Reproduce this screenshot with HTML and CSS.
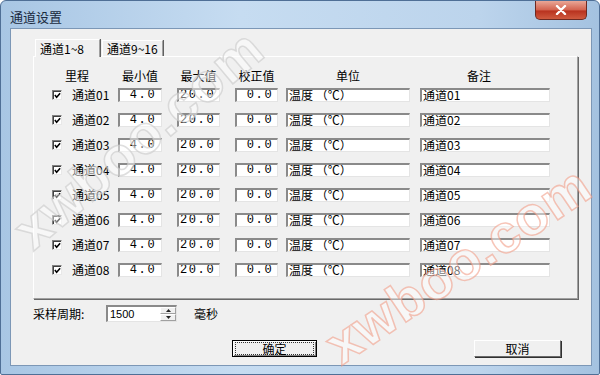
FILE: index.html
```html
<!DOCTYPE html>
<html>
<head>
    <meta charset="UTF-8">
    <title>通道设置</title>
    <link rel="stylesheet" href="styles.css">
</head>
<body>
    <div class="window">
        <div class="titlebar">
            <span class="title">通道设置</span>
            <button class="close-btn">
                <svg width="14" height="10" viewBox="0 0 14 10"><path d="M3 1 L11 9 M11 1 L3 9" stroke="#fff" stroke-width="2.4" stroke-linecap="round"/></svg>
            </button>
        </div>
        <div class="client">
            <div class="tabs">
                <div class="tab active">通道1~8</div>
                <div class="tab">通道9~16</div>
            </div>
            <div class="panel">
                <div class="grid">
                    <div class="head head-first">里程</div>
                    <div class="head w-min">最小值</div>
                    <div class="head w-max">最大值</div>
                    <div class="head w-cor">校正值</div>
                    <div class="head w-unit">单位</div>
                    <div class="head w-note head-note">备注</div>
                </div>
                <div id="rows"></div>
            </div>
            <div class="period">
                <span class="period-label">采样周期:</span>
                <div class="spin">
                    <span class="spin-value">1500</span>
                    <span class="spin-btns">
                        <span class="spin-btn"><svg width="5" height="3" viewBox="0 0 5 3"><path d="M0 3 L2.5 0 L5 3Z" fill="#222"/></svg></span>
                        <span class="spin-btn"><svg width="5" height="3" viewBox="0 0 5 3"><path d="M0 0 L2.5 3 L5 0Z" fill="#222"/></svg></span>
                    </span>
                </div>
                <span class="unit-label">毫秒</span>
            </div>
            <div class="actions">
                <button class="btn btn-default"><span class="focus">确定</span></button>
                <button class="btn btn-cancel">取消</button>
            </div>
        </div>
        <div class="watermark wm-1">xwboo.com</div>
        <div class="watermark wm-2">xwboo.com</div>
    </div>

    <script>
        const rows = document.getElementById('rows');
        for (let i = 1; i <= 8; i++) {
            const n = '0' + i;
            const row = document.createElement('div');
            row.className = 'grid row';
            row.innerHTML =
                '<div class="chan"><span class="check"><svg width="8" height="7" viewBox="0 0 8 7"><path d="M1 3 L3 5.5 L7 1" fill="none" stroke="#000" stroke-width="1.8"/></svg></span><span class="chan-name">通道' + n + '</span></div>' +
                '<div class="box w-min num">&nbsp;4.0</div>' +
                '<div class="box w-max num">20.0</div>' +
                '<div class="box w-cor num">&nbsp;0.0</div>' +
                '<div class="box w-unit">温度 （℃）</div>' +
                '<div class="box w-note">通道' + n + '</div>';
            rows.appendChild(row);
        }
    </script>
</body>
</html>
```

FILE: styles.css
```css
body {
    margin: 0;
    padding: 0;
    font-family: "Noto Sans CJK SC", "Liberation Sans", sans-serif;
    font-size: 12px;
    color: #000;
    background: #fff;
}
.window {
    position: relative;
    width: 600px;
    height: 375px;
    box-sizing: border-box;
    display: flex;
    flex-direction: column;
    background: linear-gradient(to right, #a8c6e4, #c6dcf1 40%, #bcd4ec 80%, #a4c2e0);
    border: 1px solid #4f6f96;
    border-radius: 6px 6px 2px 2px;
    overflow: hidden;
}
.titlebar {
    height: 27px;
    display: flex;
    justify-content: space-between;
    align-items: flex-start;
    flex-shrink: 0;
}
.title {
    margin: 6px 0 0 9px;
    font-size: 13px;
    color: #1a2a40;
}
.close-btn {
    width: 52px;
    height: 19px;
    margin-right: 12px;
    padding: 0;
    border: 1px solid #6d2a22;
    border-top: none;
    border-radius: 0 0 5px 5px;
    background: linear-gradient(to bottom, #e9a797, #d3624e 50%, #b8321f 55%, #cf5a3f);
    display: flex;
    align-items: center;
    justify-content: center;
}
.client {
    flex: 1;
    margin: 0 7px 8px 9px;
    border: 1px solid #7c97b6;
    background: #f0f0f0;
    padding: 0 0 0 22px;
}
.tabs {
    display: flex;
    align-items: flex-end;
    height: 27px;
    margin-left: 2px;
}
.tab {
    height: 15px;
    line-height: 15px;
    padding: 0 4px 0 4px;
    border: 1px solid #a0a0a0;
    border-bottom: none;
    border-left-color: #fff;
    border-top-color: #fff;
    box-shadow: 1px 0 0 #606060;
    margin-right: 2px;
    background: #f0f0f0;
}
.tab.active {
    height: 17px;
    line-height: 17px;
    width: 55px;
    position: relative;
    z-index: 1;
    margin-bottom: -1px;
}
.panel {
    width: 543px;
    height: 228px;
    border: 1px solid #a0a0a0;
    border-left-color: #fff;
    border-top-color: #fff;
    box-shadow: 1px 1px 0 #696969;
    padding-top: 13px;
}
.grid {
    display: flex;
    align-items: center;
    padding-left: 18px;
}
.head {
    height: 12px;
    line-height: 12px;
    text-align: center;
    margin-right: 15px;
}
.head-first {
    width: 66px;
    margin-right: 0;
    text-align: left;
    padding-left: 13px;
    box-sizing: border-box;
}
.head-note {
    padding-right: 12px;
    box-sizing: border-box;
}
.row {
    height: 25px;
}
.chan {
    width: 66px;
    display: flex;
    align-items: center;
}
.check {
    width: 8px;
    height: 8px;
    border: 1px solid #808080;
    border-right-color: #e8e8e8;
    border-bottom-color: #e8e8e8;
    box-shadow: inset 1px 1px 0 #404040;
    background: #fff;
    display: flex;
    align-items: center;
    justify-content: center;
    margin-right: 10px;
}
.check svg {
    margin: 1px 0 0 1px;
}
.box {
    height: 14px;
    line-height: 14px;
    box-sizing: border-box;
    border-style: solid;
    border-width: 2px 1px 1px 2px;
    border-color: #8a8a8a #e4e4e4 #e4e4e4 #8a8a8a;
    background: #fff;
    margin-right: 15px;
    padding-left: 1px;
    white-space: pre;
    overflow: hidden;
    display: flex;
    align-items: center;
}
.num {
    font-family: "Liberation Mono", monospace;
    font-size: 12px;
    letter-spacing: 1.6px;
}
.w-min { width: 44px; }
.w-max { width: 43px; }
.w-cor { width: 43px; margin-right: 8px; }
.w-unit { width: 124px; margin-right: 10px; }
.w-note { width: 130px; margin-right: 0; }
.period {
    display: flex;
    align-items: center;
    margin-top: 6px;
    height: 17px;
}
.period-label {
    width: 73px;
}
.spin {
    width: 71px;
    height: 17px;
    box-sizing: border-box;
    border-style: solid;
    border-width: 2px 1px 1px 2px;
    border-color: #8a8a8a #e4e4e4 #e4e4e4 #8a8a8a;
    background: #fff;
    display: flex;
    justify-content: space-between;
}
.spin-value {
    font-family: "Liberation Sans", sans-serif;
    font-size: 11px;
    line-height: 14px;
    padding-left: 2px;
}
.spin-btns {
    width: 16px;
    display: flex;
    flex-direction: column;
}
.spin-btn {
    flex: 1;
    background: #f0f0f0;
    border: 1px solid #a0a0a0;
    border-left-color: #fff;
    border-top-color: #fff;
    display: flex;
    align-items: center;
    justify-content: center;
}
.unit-label {
    margin-left: 17px;
}
.actions {
    display: flex;
    margin-top: 18px;
    padding-left: 199px;
}
.btn {
    height: 17px;
    padding: 0;
    font-family: "Noto Sans CJK SC", sans-serif;
    font-size: 12px;
    color: #000;
    background: #f0f0f0;
    border: 1px solid #fff;
    border-right-color: #6a6a6a;
    border-bottom-color: #6a6a6a;
    box-shadow: 1px 1px 0 #303030;
    display: flex;
    align-items: center;
    justify-content: center;
}
.btn-default {
    width: 85px;
    border: 1px solid #000;
    box-shadow: inset 1px 1px 0 #fff, inset -1px -1px 0 #808080;
}
.focus {
    width: 77px;
    height: 11px;
    line-height: 11px;
    border: 1px dotted #333;
    text-align: center;
}
.btn-cancel {
    width: 87px;
    margin-left: 157px;
}
.watermark {
    position: absolute;
    font-family: "Liberation Sans", sans-serif;
    font-weight: bold;
    font-size: 54px;
    letter-spacing: 1px;
    color: rgba(255, 255, 255, 0.45);
    -webkit-text-stroke: 1.5px rgba(240, 150, 125, 0.55);
    transform-origin: left center;
    white-space: nowrap;
    pointer-events: none;
}
.wm-1 {
    left: 20px;
    top: 205px;
    transform: rotate(-40deg);
    -webkit-text-stroke-color: rgba(200, 200, 200, 0.6);
}
.wm-2 {
    left: 330px;
    top: 318px;
    transform: rotate(-34deg);
}
```
